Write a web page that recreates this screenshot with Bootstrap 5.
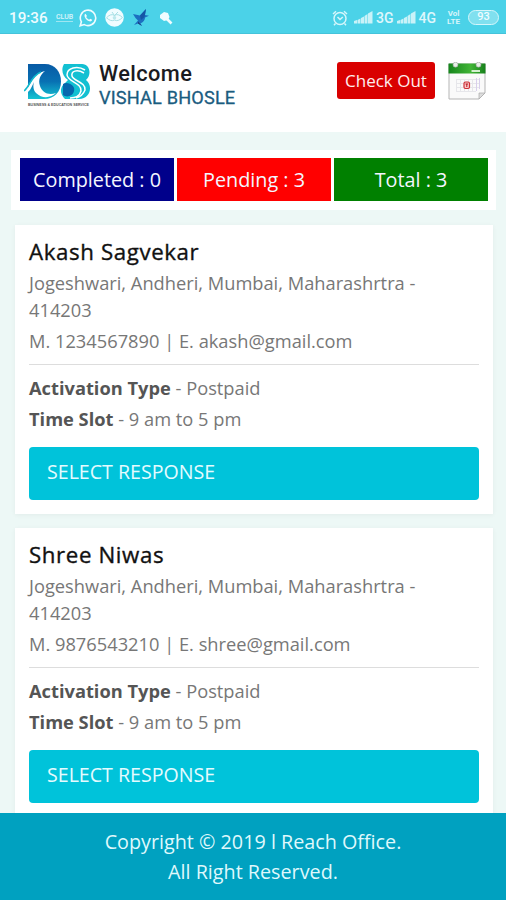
<!DOCTYPE html>
<html lang="en">
<head>
<meta charset="utf-8">
<meta name="viewport" content="width=device-width, initial-scale=1">
<title>Visits</title>
<link href="https://cdn.jsdelivr.net/npm/bootstrap@5.3.0/dist/css/bootstrap.min.css" rel="stylesheet">
<style>
body{font-family:"Open Sans",sans-serif;background:#edf8f6;color:#777;height:900px;overflow:hidden}
.status{height:34px;background:#4bd2e8;color:#effcff;font:500 15.2px Roboto,sans-serif;padding:2px 7px 0 9px;border-bottom:1px solid #45c3da}
.status svg{display:block;flex:none}
.club{font-size:7px;line-height:9px;width:20px;margin-left:7px;opacity:.85}
.club span{border-bottom:1px solid #aeeaf3}
.net{font-size:14px;opacity:.9}
.volte{font-size:8px;line-height:1;font-weight:700;opacity:.85;width:15px;margin-left:10px}
.volte div{line-height:8px;height:8px}
.batt{width:31px;height:15px;border:1.5px solid #d5f6fb;border-radius:8px;font-size:11px;line-height:12px;background:#80e0ef;margin-left:7px}
.brandbar{height:98px;background:#fff;padding:28px 20px 0 24px}
.who{font-family:Roboto,sans-serif;font-size:21.8px;line-height:25px;font-weight:500;color:#1b1b1f;margin:-1px 0 0 8px;letter-spacing:.4px}
.who .nm{font-size:18.2px;line-height:24px;font-weight:400;color:#1a5c80;letter-spacing:.15px;-webkit-text-stroke:.3px #1a5c80}
.btn-out{background:#d90000;color:#ffeded;width:98px;height:37px;border-radius:3px;font-size:17px;padding:0;margin-right:13px}
.btn-out:hover{background:#b80000;color:#fff}
.stats{margin:18px 10px 0 11px;height:60px;background:#fff;padding:8px 8px 9px 9px;gap:3px}
.stats>div{color:#f4f6ff;font-size:19.8px;height:43px}
.c-done{background:#00008b}.c-pend{background:#f00}.c-total{background:green}
.visit{margin:15px 13px 0 15px;height:289px;background:#fff;padding:13px 14px 0;box-shadow:0 1px 5px rgba(0,0,0,.05)}
.visit+.visit{margin-top:14px}
.visit h2{font-size:22.3px;line-height:28px;color:#111;font-weight:500;margin:0 0 3px;-webkit-text-stroke:.35px #111;letter-spacing:.6px}
.visit p{font-size:18.27px;line-height:27px;margin:0}
.visit .tel{margin-top:4px}
.visit .slot{margin:4px 0 15px}
.visit b{color:#555;font-weight:700}
.visit hr{margin:10px 0 8.500px;border-color:#ddd;opacity:1}
.btn-resp{height:53px;border-radius:4px;background:#00c3da;color:#e4fbff;font-size:19.6px;padding:0 17px 2px;text-align:left}
.btn-resp:hover{background:#00aec3;color:#fff}
.foot{height:87px;background:#00a1c0;color:#dff8fc;font-size:19.75px;line-height:29.5px;padding-top:14px}
</style>
<script src="https://cdn.jsdelivr.net/npm/bootstrap@5.3.0/dist/js/bootstrap.bundle.min.js"></script>
</head>
<body class="d-flex flex-column">
<div class="status d-flex align-items-center flex-shrink-0">
<span>19:36</span>
<div class="club text-center"><span>CLUB</span></div>
<svg class="ms-1" width="18" height="18" viewBox="0 0 18 18" fill="none" stroke="#effcff"><path d="M1.2 16.8 2.4 12.8A7.7 7.7 0 1 1 5.3 15.6Z" stroke-width="1.6"/><path d="M6.5 4.800c-1.200.600-1.200 2.200-.600 3.400 1 2 2.400 3.400 4.400 4.100 1.200.400 2.600-.1 2.900-1.500L11.200 9.700l-1 1.100C8.700 10.100 7.900 9.300 7.200 8l.800-1z" fill="#effcff" stroke="none"/></svg>
<svg class="ms-2" width="19" height="19" viewBox="0 0 19 19"><circle cx="9.500" cy="9.500" r="9.300" fill="#effcff"/><path d="M1.500 9.800Q6 5 9.500 7.500 13 5 17.500 9.500 13 14 9.500 12 6 14 1.500 9.800ZM7 4l2.500 3.500L13 4" fill="none" stroke="#a5dfe5" stroke-width="1"/><circle cx="9.500" cy="9.800" r="1.800" fill="#bce8ec"/></svg>
<svg width="17" height="18" viewBox="0 0 17 18" style="margin-left:9px"><path d="M0 5 7 6.500 13 0 12 6l4 .800-4 1.700C12 12 9 14 7.500 14L9 17 5 14.500 1 16 5 11.500 2.500 9Z" fill="#1c6fc0"/><path d="M7 6.500 13 0 11.500 8 8 11Z" fill="#1556a5"/><path d="M5 12.500 9 17 5 14.500Z" fill="#1d3a78"/></svg>
<svg width="14" height="14" viewBox="0 0 14 14" style="margin-left:9px"><path d="M5 1 9 2l1.500 4L9 9 5 10 1 7 1 4Z" fill="#effcff"/><path d="m8 8 4.500 4.500" stroke="#effcff" stroke-width="2.600"/></svg>
<svg class="ms-auto" width="16" height="16" viewBox="0 0 16 16" fill="none" stroke="#d5f6fb" stroke-width="1.500"><circle cx="8" cy="8.500" r="6"/><path d="M5.500 7 8 9.500 10.800 7M1 4 4 1.200M15 4 12 1.200M3.500 13.500 2 15.200M12.500 13.500 14 15.200"/></svg>
<svg width="19" height="13" viewBox="0 0 19 13" fill="#c9f2f8" style="margin-left:6px"><path d="M0 12.500V10l3-1v3.500zM3.500 12.500V9l3-1.500v5zM7 12.500V7l3-1.500v7zM10.500 12.500V5l3-2v9.500zM14 12.500V2.500l4.500-2.500v12.500z"/></svg>
<span class="net" style="margin-left:3px">3G</span>
<svg width="19" height="13" viewBox="0 0 19 13" fill="#c9f2f8" style="margin-left:3px"><path d="M0 12.500V10l3-1v3.500zM3.500 12.500V9l3-1.500v5zM7 12.500V7l3-1.500v7zM10.500 12.500V5l3-2v9.500zM14 12.500V2.500l4.500-2.500v12.500z"/></svg>
<span class="net" style="margin-left:3px">4G</span>
<div class="volte text-center"><div>Vol</div><div>LTE</div></div>
<span class="batt text-center">93</span>
</div>
<header class="brandbar d-flex align-items-start flex-shrink-0">
<svg width="67" height="47" viewBox="0 0 67 47" role="img" aria-label="DS">
<defs><linearGradient id="wv" x1="0" y1="0" x2="0" y2="1"><stop offset="0" stop-color="#075aa5"/><stop offset=".5" stop-color="#0871b3"/><stop offset="1" stop-color="#14c4d2"/></linearGradient></defs>
<path d="M4 2H21C31 2 37 10 37 19.500 37 30 30 37 20 37H4Z" fill="url(#wv)"/>
<path d="M0 31C6 26 7 12 21 9 16 13 14 18 16 24 18 30 24 34 32 31 27 36 18 37 12 31 9 28 9 23 10 20 7 26 6 31 0 31Z" fill="#fff"/>
<path d="M0 29C6 24 7 14 17 10" fill="none" stroke="#12b9cc" stroke-width="1.600"/>
<path d="M40 2H58C66 2 68 13 62 18 69 23 67 37 55 37H41C36 32 36 27 39 23L44 18C38 14 37 7 40 2Z" fill="#13c0d2"/>
<path d="M39 22C44 19 52 24 50 29 49 34 43 36 39 33Z" fill="#0867ad"/>
<path d="M61 8C53 3 43 6 43 13 44 20 58 21 57 29 56 33 52 36 46 36M60 11C53 7 47 9 48 14 49 19 62 20 61 28 59 33 56 35 52 36" fill="none" stroke="#fff" stroke-width="1.500"/>
<text x="4" y="43.500" font-family="Liberation Sans,sans-serif" font-size="3.700" font-weight="700" fill="#555" textLength="61" lengthAdjust="spacingAndGlyphs">BUSINESS &amp; EDUCATION SERVICE</text>
</svg>
<div class="who">Welcome<div class="nm">VISHAL BHOSLE</div></div>
<button class="btn btn-out ms-auto">Check Out</button>
<svg width="38" height="38" viewBox="0 0 38 38" role="img" aria-label="Calendar">
<defs><linearGradient id="cg" x1="0" x2="1"><stop offset="0" stop-color="#15851c"/><stop offset=".6" stop-color="#42b537"/><stop offset="1" stop-color="#16801b"/></linearGradient></defs>
<path d="M1 2H37V31L31 37H1Z" fill="#fafafa" stroke="#b5b5b5"/>
<path d="M.500 1.500H37.500V11.500H.500Z" fill="url(#cg)"/>
<path d="M8 17.500H32M8 21.500H32M8 25.500H32M8 29.500H28M8.500 17V30M12.500 17V30M16.500 17V30M20.500 17V30M24.500 17V30" stroke="#e6e6ea" fill="none"/><path d="M28.500 16V29M31.500 16V27" stroke="#d9cfec"/>
<path d="M31 37V31H37Z" fill="#ddd" stroke="#aaa" stroke-width=".700"/>
<path d="M23.500 9H32" stroke="#d4f0cf" stroke-width="2"/>
<circle cx="7.500" cy="2.700" r="2.500" fill="#e8f0e8" stroke="#999" stroke-width=".600"/><circle cx="30.500" cy="2.700" r="2.500" fill="#e8f0e8" stroke="#999" stroke-width=".600"/>
<rect x="16" y="20" width="5.500" height="6.500" rx="1.500" fill="#f9c8c8" stroke="#ce3037" stroke-width="1.200"/><path d="M17.500 22h2.500M18.800 22v3" stroke="#b91720"/>
</svg>
</header>
<main class="flex-grow-1 overflow-hidden">
<div class="stats d-flex text-center">
<div class="c-done flex-fill w-100 d-flex align-items-center justify-content-center">Completed : 0</div>
<div class="c-pend flex-fill w-100 d-flex align-items-center justify-content-center">Pending : 3</div>
<div class="c-total flex-fill w-100 d-flex align-items-center justify-content-center">Total : 3</div>
</div>
<section class="visit">
<h2>Akash Sagvekar</h2>
<p>Jogeshwari, Andheri, Mumbai, Maharashrtra - 414203</p>
<p class="tel">M. 1234567890 | E. akash@gmail.com</p>
<hr>
<p><b>Activation Type</b> - Postpaid</p>
<p class="slot"><b>Time Slot</b> - 9 am to 5 pm</p>
<button class="btn btn-resp w-100">SELECT RESPONSE</button>
</section>
<section class="visit">
<h2>Shree Niwas</h2>
<p>Jogeshwari, Andheri, Mumbai, Maharashrtra - 414203</p>
<p class="tel">M. 9876543210 | E. shree@gmail.com</p>
<hr>
<p><b>Activation Type</b> - Postpaid</p>
<p class="slot"><b>Time Slot</b> - 9 am to 5 pm</p>
<button class="btn btn-resp w-100">SELECT RESPONSE</button>
</section>
</main>
<footer class="foot text-center flex-shrink-0">Copyright © 2019 l Reach Office.<br>All Right Reserved.</footer>
</body>
</html>
